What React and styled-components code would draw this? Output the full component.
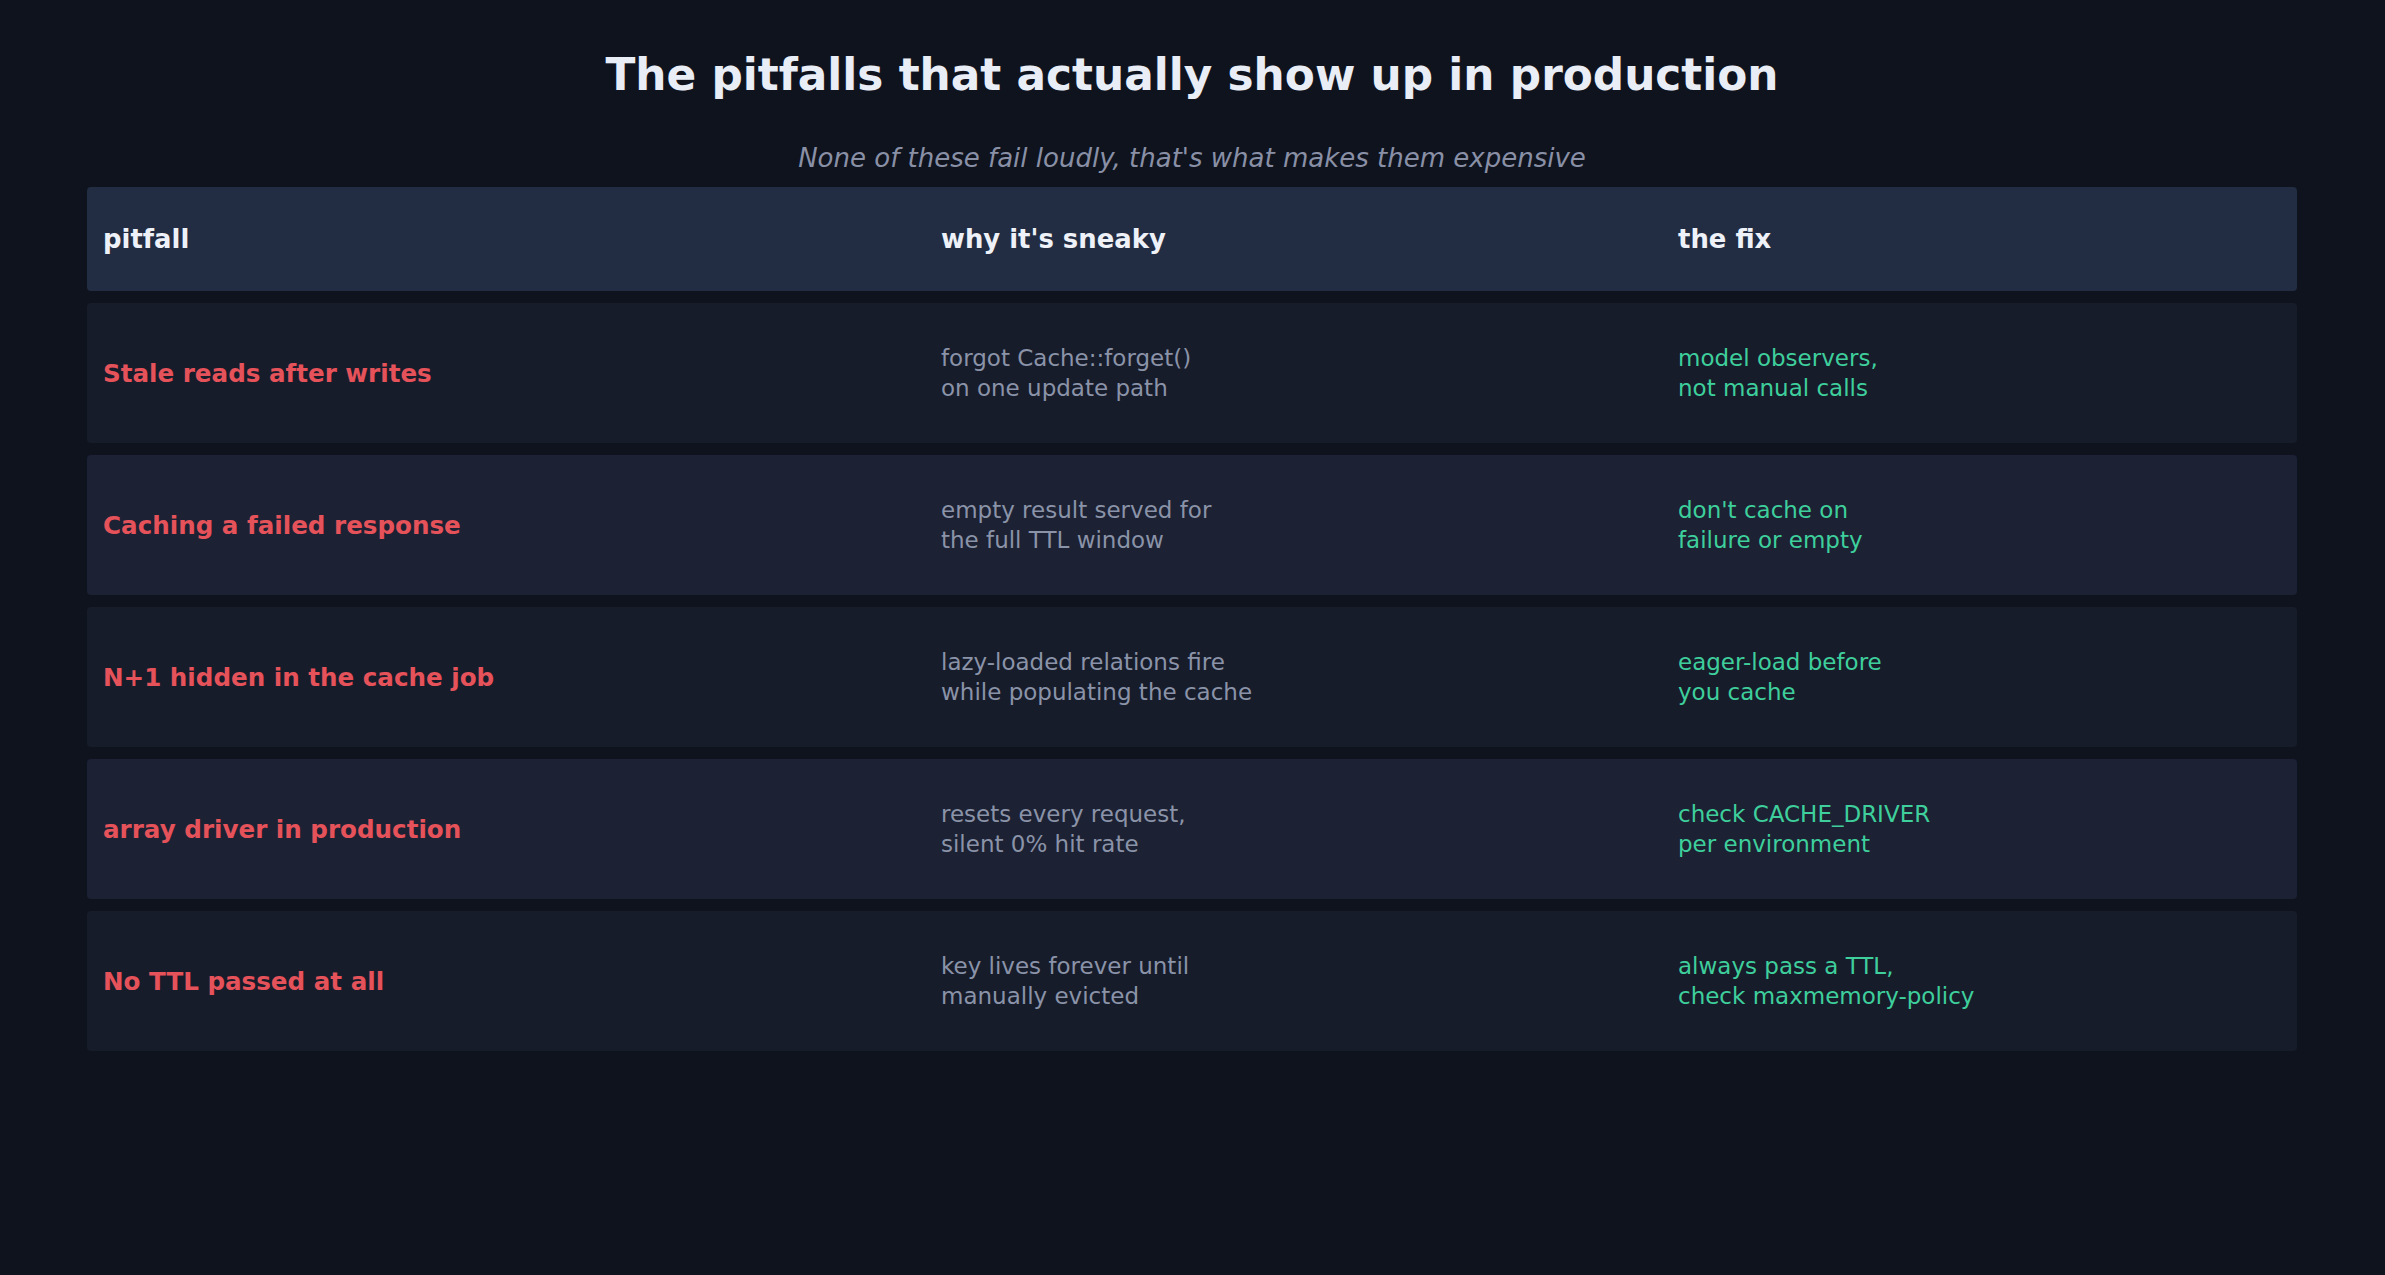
import styled, { createGlobalStyle } from "styled-components";

const rows = [
  {
    pitfall: "Stale reads after writes",
    why: ["forgot Cache::forget()", "on one update path"],
    fix: ["model observers,", "not manual calls"],
  },
  {
    pitfall: "Caching a failed response",
    why: ["empty result served for", "the full TTL window"],
    fix: ["don't cache on", "failure or empty"],
  },
  {
    pitfall: "N+1 hidden in the cache job",
    why: ["lazy-loaded relations fire", "while populating the cache"],
    fix: ["eager-load before", "you cache"],
  },
  {
    pitfall: "array driver in production",
    why: ["resets every request,", "silent 0% hit rate"],
    fix: ["check CACHE_DRIVER", "per environment"],
  },
  {
    pitfall: "No TTL passed at all",
    why: ["key lives forever until", "manually evicted"],
    fix: ["always pass a TTL,", "check maxmemory-policy"],
  },
];

function App() {
  return (
    <>
      <GlobalStyle />
      <S.Page>
        <S.Title>The pitfalls that actually show up in production</S.Title>
        <S.Subtitle>None of these fail loudly, that's what makes them expensive</S.Subtitle>
        <S.Table>
          <S.HeadRow>
            <S.HeadCell>pitfall</S.HeadCell>
            <S.HeadCell>why it's sneaky</S.HeadCell>
            <S.HeadCell>the fix</S.HeadCell>
          </S.HeadRow>
          {rows.map((row, i) => (
            <S.Row key={row.pitfall} $alt={i % 2 === 1}>
              <S.Pitfall>{row.pitfall}</S.Pitfall>
              <S.Note>
                {row.why[0]}
                <br />
                {row.why[1]}
              </S.Note>
              <S.Fix>
                {row.fix[0]}
                <br />
                {row.fix[1]}
              </S.Fix>
            </S.Row>
          ))}
        </S.Table>
      </S.Page>
    </>
  );
}

export default App;

const GlobalStyle = createGlobalStyle`
  html, body {
    margin: 0;
    background: #0f131e;
  }
  body {
    font-family: "DejaVu Sans", "Liberation Sans", sans-serif;
  }
`;

const Page = styled.main`
  min-height: 1275px;
  box-sizing: border-box;
  padding: 45.5px 88px 0 87px;
  display: flex;
  flex-direction: column;
  align-items: center;
`;

const Title = styled.h1`
  margin: 0;
  font-size: 43.8px;
  line-height: 58px;
  font-weight: 700;
  color: #e9edf6;
`;

const Subtitle = styled.p`
  margin: 39.5px 0 13px;
  font-size: 26px;
  line-height: 31px;
  font-style: italic;
  color: #8990a6;
`;

const Table = styled.div`
  width: 100%;
  display: flex;
  flex-direction: column;
  gap: 12px;
`;

const rowGrid = `
  display: grid;
  grid-template-columns: 838px 737px 1fr;
  align-items: center;
  border-radius: 4px;
`;

const HeadRow = styled.div`
  ${rowGrid};
  height: 104px;
  background: #222c42;
`;

const HeadCell = styled.div`
  padding: 0 16px;
  font-size: 25.9px;
  font-weight: 700;
  color: #eef1f8;
`;

const Row = styled.div`
  ${rowGrid};
  height: 140px;
  background: ${({ $alt }) => ($alt ? "#1c2133" : "#171c2b")};
`;

const Pitfall = styled.div`
  padding: 0 16px;
  font-size: 24.6px;
  font-weight: 700;
  color: #e5525a;
`;

const Note = styled.div`
  padding: 0 16px;
  font-size: 23px;
  line-height: 30.4px;
  color: #8a93a8;
`;

const Fix = styled(Note)`
  color: #3ecf9c;
`;

const S = {
  Page,
  Title,
  Subtitle,
  Table,
  HeadRow,
  HeadCell,
  Row,
  Pitfall,
  Note,
  Fix,
};
